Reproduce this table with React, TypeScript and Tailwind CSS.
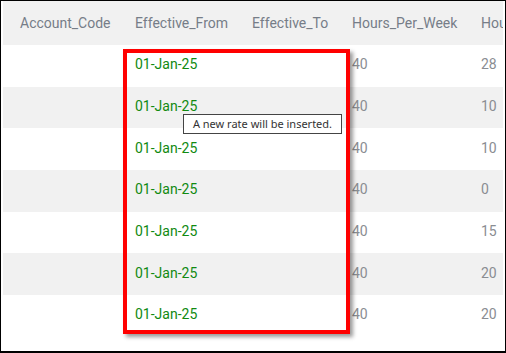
import React from "react";

const rows = [
  { from: "01-Jan-25", hours: "40", other: "28" },
  { from: "01-Jan-25", hours: "40", other: "10" },
  { from: "01-Jan-25", hours: "40", other: "10" },
  { from: "01-Jan-25", hours: "40", other: "0" },
  { from: "01-Jan-25", hours: "40", other: "15" },
  { from: "01-Jan-25", hours: "40", other: "20" },
  { from: "01-Jan-25", hours: "40", other: "20" },
];

const cols = "grid grid-cols-[115px_117px_100px_129px_1fr]";

export default function App() {
  return (
    <div
      className="relative w-[506px] h-[353px] overflow-hidden bg-white border border-b-2 border-black px-[2px]"
      style={{ fontFamily: "Roboto, 'Noto Sans', sans-serif" }}
    >
      {/* header */}
      <div className={`${cols} h-[44px] items-center bg-[#f1f1f1] text-[14px] text-[#767d88] whitespace-nowrap overflow-hidden`}>
        <div className="pl-[17px]">Account_Code</div>
        <div className="pl-[17px]">Effective_From</div>
        <div className="pl-[17px]">Effective_To</div>
        <div className="pl-[17px]">Hours_Per_Week</div>
        <div className="pl-[17px] overflow-hidden">Hours_Per_Day</div>
      </div>

      {/* body */}
      {rows.map((r, i) => (
        <div
          key={i}
          className={`${cols} h-[41.67px] items-center pb-[2px] text-[14px] whitespace-nowrap overflow-hidden ${
            i % 2 === 1 ? "bg-[#f1f1f1]" : "bg-white"
          }`}
        >
          <div className="pl-[17px]"></div>
          <div className="pl-[17px] text-[#118a11]">{r.from}</div>
          <div className="pl-[17px]"></div>
          <div className="pl-[17px] text-[#8a8d92]">{r.hours}</div>
          <div className="pl-[17px] text-[#8a8d92]">{r.other}</div>
        </div>
      ))}

      {/* highlight around the effective date column */}
      <div className="absolute left-[122px] top-[48px] w-[227px] h-[285px] border-4 border-[#ff0000] shadow-[3px_3px_4px_rgba(0,0,0,0.4)] pointer-events-none" />

      {/* tooltip */}
      <div
        className="absolute left-[182px] top-[113px] w-[159px] h-[20px] flex items-center justify-center bg-white border border-[#444] text-[11px] text-[#333] whitespace-nowrap"
        style={{ fontFamily: "'Noto Sans', 'Open Sans', sans-serif" }}
      >
        A new rate will be inserted.
      </div>
    </div>
  );
}
